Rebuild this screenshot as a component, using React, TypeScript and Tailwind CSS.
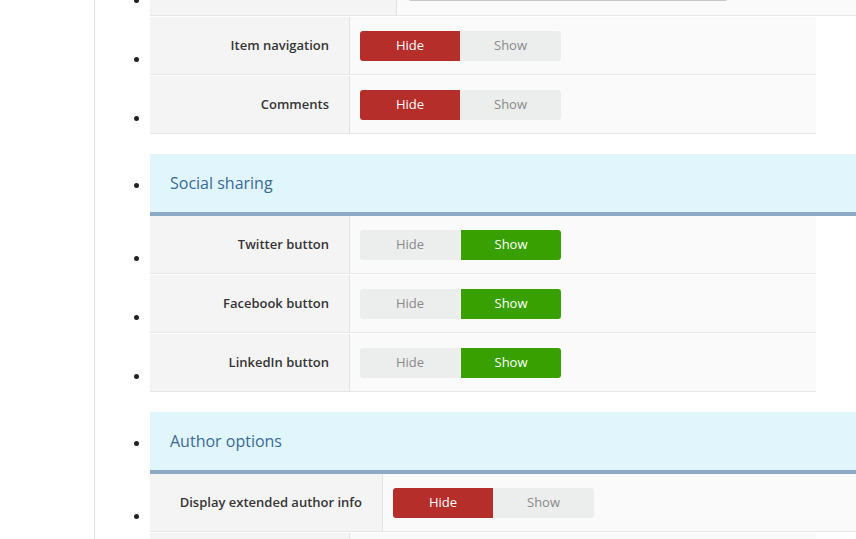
import React from 'react';

type RowProps = { label: string; labelW: string; value: 'hide' | 'show'; full?: boolean };

const Bullet = ({ header }: { header?: boolean }) => (
  <div className={header ? 'w-[55px] shrink-0 flex justify-end items-center pr-[11px]' : 'w-[55px] shrink-0 flex justify-end items-end pr-[11px] pb-[13px]'}>
    <div className="w-[5px] h-[5px] rounded-full bg-[#222]" />
  </div>
);

function Toggle({ value }: { value: 'hide' | 'show' }) {
  const hide = value === 'hide';
  return (
    <div className="flex h-[30px] rounded-[3px] overflow-hidden text-[13px]">
      <div className={hide ? 'w-[100px] flex items-center justify-center bg-[#b52e2a] text-white' : 'w-[100px] flex items-center justify-center bg-[#eceded] text-[#8a8a8a]'}>Hide</div>
      <div className={hide ? 'w-[101px] flex items-center justify-center bg-[#eceded] text-[#8a8a8a]' : 'w-[101px] flex items-center justify-center bg-[#38a000] text-white border-l border-[#f4f4f4]'}>Show</div>
    </div>
  );
}

function Row({ label, labelW, value, full }: RowProps) {
  return (
    <li className="flex mb-px">
      <Bullet />
      <div className={full ? 'flex flex-1 h-[58px] border-b border-[#e6e6e6]' : 'flex w-[666px] h-[58px] border-b border-[#e6e6e6]'}>
        <div className={`${labelW} shrink-0 bg-[#f4f4f4] border-r border-[#e3e3e3] flex items-center justify-end pr-[20px] text-[13px] font-semibold text-[#363636]`}>
          {label}
        </div>
        <div className="flex-1 bg-[#fafafa] flex items-center pl-[10px]">
          <Toggle value={value} />
        </div>
      </div>
    </li>
  );
}

function Header({ title }: { title: string }) {
  return (
    <li className="flex mt-[20px]">
      <Bullet header />
      <div className="flex-1 h-[62px] bg-[#e1f5fd] border-b-4 border-[#8ca9c5] flex items-center pl-[20px] text-[16px] text-[#3a6b98]">
        {title}
      </div>
    </li>
  );
}

export default function App() {
  return (
    <div className="flex h-screen overflow-hidden bg-white" style={{ fontFamily: '"Open Sans", "Liberation Sans", sans-serif' }}>
      <div className="w-[95px] shrink-0 border-r border-[#e2e2e2]" />
      <ul className="flex-1 mt-[-42px]">
        <li className="flex mb-px">
          <Bullet />
          <div className="flex flex-1 h-[58px] border-b border-[#e6e6e6]">
            <div className="w-[247px] shrink-0 bg-[#f4f4f4] border-r border-[#e3e3e3]" />
            <div className="flex-1 bg-[#fafafa] flex items-center pl-[11px]">
              <div className="w-[320px] h-[28px] bg-white border border-[#c8c8c8] rounded-[3px]" />
            </div>
          </div>
        </li>
        <Row label="Item navigation" labelW="w-[200px]" value="hide" />
        <Row label="Comments" labelW="w-[200px]" value="hide" />
        <Header title="Social sharing" />
        <Row label="Twitter button" labelW="w-[200px]" value="show" />
        <Row label="Facebook button" labelW="w-[200px]" value="show" />
        <Row label="LinkedIn button" labelW="w-[200px]" value="show" />
        <Header title="Author options" />
        <Row label="Display extended author info" labelW="w-[233px]" value="hide" full />
        <li className="flex mb-px">
          <Bullet />
          <div className="flex w-[666px] h-[58px] border-b border-[#e6e6e6]">
            <div className="w-[200px] shrink-0 bg-[#f4f4f4] border-r border-[#e3e3e3]" />
            <div className="flex-1 bg-[#fafafa]" />
          </div>
        </li>
      </ul>
    </div>
  );
}
